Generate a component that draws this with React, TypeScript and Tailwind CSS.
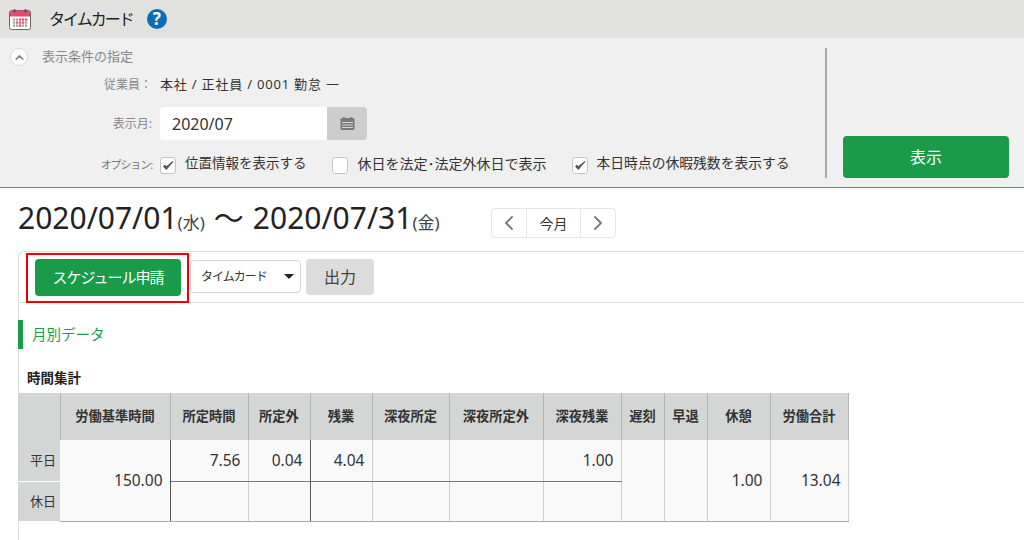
import { ChevronLeft, ChevronRight, ChevronUp } from "lucide-react";

const font = { fontFamily: '"Noto Sans", "Noto Sans CJK JP", sans-serif' };

function CalendarLogo() {
  const cells = [];
  for (let r = 0; r < 3; r++) {
    for (let c = 0; c < 5; c++) {
      const pink = (r === 0 && c > 1) || (r === 1 && c > 0 && c < 4) || (r === 2 && c === 2);
      cells.push(<rect key={`${r}-${c}`} x={4 + c * 3} y={9.5 + r * 3} width="2.2" height="2.2" fill={pink ? "#e8476f" : "#a0a0a0"} />);
    }
  }
  return (
    <svg width="22" height="21" viewBox="0 0 22 21">
      <rect x="0.5" y="1.5" width="21" height="19" rx="2" fill="#fff" stroke="#666" strokeWidth="1" />
      <path d="M1 7.5V3.5a2 2 0 0 1 2-2h16a2 2 0 0 1 2 2v4z" fill="#e8476f" />
      <rect x="4.5" y="0" width="2" height="4" rx="1" fill="#555" />
      <rect x="15.5" y="0" width="2" height="4" rx="1" fill="#555" />
      {cells}
    </svg>
  );
}

function SmallCalendar() {
  return (
    <svg width="15" height="13" viewBox="0 0 15 13">
      <rect x="0.5" y="1" width="14" height="12" rx="1.5" fill="#77797a" />
      <rect x="3" y="0" width="1.6" height="3" fill="#77797a" />
      <rect x="10.4" y="0" width="1.6" height="3" fill="#77797a" />
      <path d="M2 5.5h11M2 8h11M2 10.5h11" stroke="#d4d4d4" strokeWidth="1" />
    </svg>
  );
}

function Check({ on }: { on: boolean }) {
  return (
    <span className="flex h-[17px] w-[16px] shrink-0 items-center justify-center rounded-[3px] border border-[#c4c4c4] bg-white">
      {on && (
        <svg width="12" height="11" viewBox="0 0 12 11">
          <path d="M1.5 6.5l2.8 3L11 1.5 4.4 6.6 2.8 5.2z" fill="#555" stroke="#555" strokeWidth="1" strokeLinejoin="round" />
        </svg>
      )}
    </span>
  );
}

const headers = [
  { label: "労働基準時間", w: "w-[110px]" },
  { label: "所定時間", w: "w-[78px]" },
  { label: "所定外", w: "w-[62px]" },
  { label: "残業", w: "w-[62px]" },
  { label: "深夜所定", w: "w-[77px]" },
  { label: "深夜所定外", w: "w-[94px]" },
  { label: "深夜残業", w: "w-[78px]" },
  { label: "遅刻", w: "w-[43px]" },
  { label: "早退", w: "w-[43px]" },
  { label: "休憩", w: "w-[63px]" },
  { label: "労働合計", w: "w-[78px]" },
];

const cell = "border-r border-[#cfcfcf] bg-[#f9f9f9] pl-2 pr-[7px] text-right align-middle";
const darkCell = "border-r border-[#555] bg-[#f9f9f9] pl-2 pr-[7px] text-right align-middle";

export default function App() {
  return (
    <div className="h-[540px] w-[1024px] overflow-hidden bg-white text-[#333]" style={font}>
      {/* Title bar */}
      <div className="flex h-[38px] items-center bg-[#e1e1df] pl-[9px]">
        <CalendarLogo />
        <span className="ml-[18px] text-[16px] tracking-[-2px] text-[#222]">タイムカード</span>
        <span className="mb-[1px] ml-[14px] flex h-[20px] w-[20px] items-center justify-center rounded-full bg-[#0b6db5] text-[17px] font-bold text-white">?</span>
      </div>

      {/* Filter */}
      <div className="flex h-[150px] border-b border-[#4f9a68] bg-[#f0f0f0]">
        <div className="w-[825px] pt-[10px]">
          <div className="flex h-[18px] items-center pl-[10px]">
            <span className="flex h-[18px] w-[18px] items-center justify-center rounded-full border border-[#d8d8d8] bg-white">
              <ChevronUp size={13} strokeWidth={3} className="text-[#888]" />
            </span>
            <span className="ml-[14px] text-[13px] text-[#888]">表示条件の指定</span>
          </div>
          <div className="mt-[9px] flex h-[20px] items-center">
            <span className="w-[152px] text-right text-[12px] text-[#888]">従業員：</span>
            <span className="ml-[8px] text-[13px] tracking-[0.8px]">本社 / 正社員 / 0001 勤怠 一</span>
          </div>
          <div className="mt-[12px] flex h-[33px] items-center">
            <span className="w-[152px] text-right text-[12px] text-[#888]">表示月:</span>
            <div className="ml-[8px] flex h-[33px] w-[207px] overflow-hidden rounded-[4px]">
              <div className="flex w-[167px] items-center bg-white pl-[12px] text-[16px]">2020/07</div>
              <div className="flex flex-1 items-center justify-center bg-[#cdcdcd]">
                <SmallCalendar />
              </div>
            </div>
          </div>
          <div className="mt-[13px] flex h-[24px] items-center">
            <span className="w-[152px] text-right text-[11px] tracking-[-1.1px] text-[#777]">オプション:</span>
            <div className="ml-[8px]"><Check on /></div>
            <span className="mb-[3px] ml-[9px] text-[13.5px]">位置情報を表示する</span>
            <div className="ml-[25px]"><Check on={false} /></div>
            <span className="mb-[3px] ml-[10px] text-[14px]">休日を法定･法定外休日で表示</span>
            <div className="ml-[25px]"><Check on /></div>
            <span className="mb-[3px] ml-[9px] text-[13.8px]">本日時点の休暇残数を表示する</span>
          </div>
        </div>
        <div className="mt-[10px] h-[130px] w-[2px] bg-[#a8a8a8]" />
        <div className="ml-[16px] mt-[98px]">
          <button className="h-[42px] w-[166px] rounded-[4px] bg-[#1a9b4a] text-[16px] text-white">表示</button>
        </div>
      </div>

      {/* Date range */}
      <div className="flex h-[63px] items-center pl-[18px]">
        <div className="flex w-[473px] items-baseline">
          <span className="text-[30px] leading-none text-[#222]">2020/07/01</span>
          <span className="text-[17px] text-[#444]">(水)</span>
          <span className="ml-[9px] text-[30px] leading-none text-[#222]">～</span>
          <span className="ml-[9px] text-[30px] leading-none text-[#222]">2020/07/31</span>
          <span className="text-[17px] text-[#444]">(金)</span>
        </div>
        <div className="mt-[7px] flex h-[30px] w-[125px] rounded-[4px] border border-[#e6e6e6] bg-white">
          <span className="flex w-[35px] items-center justify-center border-r border-[#e6e6e6]"><ChevronLeft size={24} strokeWidth={1.8} className="text-[#777]" /></span>
          <span className="flex w-[54px] items-center justify-center border-r border-[#e6e6e6] text-[14px]">今月</span>
          <span className="flex flex-1 items-center justify-center"><ChevronRight size={24} strokeWidth={1.8} className="text-[#777]" /></span>
        </div>
      </div>

      {/* Panel */}
      <div className="ml-[18px] h-[289px] rounded-tl-[6px] border-l border-t border-[#dcdcdc]">
        <div className="flex h-[51px] items-start border-b border-[#dcdcdc] pl-[16px] pt-[7px]">
          <div className="relative">
            <button className="h-[37px] w-[146px] rounded-[4px] bg-[#1a9b4a] text-[15px] tracking-[-1px] text-white">スケジュール申請</button>
            <div className="absolute -bottom-[7px] -left-[9px] -right-[8px] -top-[6px] border-2 border-[#f00000]" />
          </div>
          <div className="ml-[9px] mt-[1px] flex h-[33px] w-[111px] items-center rounded-[4px] border border-[#d4d4d4] bg-white pl-[10px] text-[12px] tracking-[-1px]">
            タイムカード
            <span className="ml-[17px] h-0 w-0 border-x-[5px] border-t-[5px] border-x-transparent border-t-[#222]" />
          </div>
          <button className="ml-[5px] h-[36px] w-[68px] rounded-[4px] bg-[#dcdcdc] text-[16px] text-[#444]">出力</button>
        </div>

        <div className="-ml-px mt-[17px] flex h-[29px] items-center border-l-[5px] border-[#1a9b4a] pl-[9px] text-[14.5px] text-[#1a9b4a]">月別データ</div>

        <div className="ml-[8px] mt-[19px] h-[20px] text-[13.5px] font-bold leading-[20px] text-[#222]">時間集計</div>

        <table className="-ml-px mt-[5px] table-fixed border-collapse">
          <thead>
            <tr className="h-[47px] bg-[#d4d6d6]">
              <th className="w-[42px] border-r border-[#b4b4b4] p-0" />
              {headers.map((h) => (
                <th key={h.label} className={`${h.w} border-r border-[#b4b4b4] p-0 text-[13.25px] font-bold text-[#333]`}>{h.label}</th>
              ))}
            </tr>
          </thead>
          <tbody className="text-[15.5px]">
            <tr className="h-[41px]">
              <td className="border-b border-white bg-[#d4d6d6] pr-[4px] text-right text-[13px]">平日</td>
              <td rowSpan={2} className={`${darkCell} border-b border-b-[#aaa]`}>150.00</td>
              <td className={`${cell} border-b border-b-[#777]`}>7.56</td>
              <td className={`${darkCell} border-b border-b-[#777]`}>0.04</td>
              <td className={`${cell} border-b border-b-[#777]`}>4.04</td>
              <td className={`${cell} border-b border-b-[#777]`} />
              <td className={`${cell} border-b border-b-[#777]`} />
              <td className={`${cell} border-b border-b-[#777]`}>1.00</td>
              <td rowSpan={2} className={`${cell} border-b border-b-[#aaa]`} />
              <td rowSpan={2} className={`${cell} border-b border-b-[#aaa]`} />
              <td rowSpan={2} className={`${cell} border-b border-b-[#aaa]`}>1.00</td>
              <td rowSpan={2} className={`${cell} border-b border-b-[#aaa]`}>13.04</td>
            </tr>
            <tr className="h-[40px]">
              <td className="bg-[#d4d6d6] pr-[4px] text-right text-[13px]">休日</td>
              <td className={`${cell} border-b border-b-[#aaa]`} />
              <td className={`${darkCell} border-b border-b-[#aaa]`} />
              <td className={`${cell} border-b border-b-[#aaa]`} />
              <td className={`${cell} border-b border-b-[#aaa]`} />
              <td className={`${cell} border-b border-b-[#aaa]`} />
              <td className={`${cell} border-b border-b-[#aaa]`} />
            </tr>
          </tbody>
        </table>
      </div>
    </div>
  );
}
